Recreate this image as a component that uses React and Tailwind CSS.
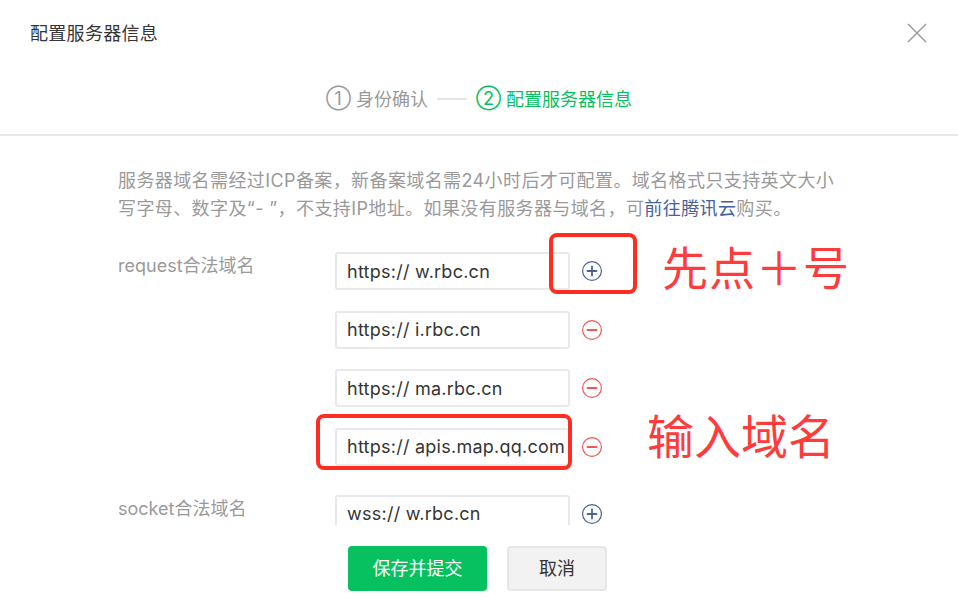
import React from "react";

const font = { fontFamily: 'Inter, "Noto Sans CJK SC", sans-serif' };

function CircleIcon({ type }) {
  const color = type === "plus" ? "#4a6399" : "#f25555";
  return (
    <svg width="22" height="22" viewBox="0 0 22 22" className="shrink-0">
      <circle cx="11" cy="11" r="9.4" fill="none" stroke={color} strokeWidth="1.2" />
      <line x1="6.5" y1="11" x2="15.5" y2="11" stroke={color} strokeWidth="1.8" strokeLinecap="round" />
      {type === "plus" && (
        <line x1="11" y1="6.5" x2="11" y2="15.5" stroke={color} strokeWidth="1.8" strokeLinecap="round" />
      )}
    </svg>
  );
}

function DomainInput({ value, icon }) {
  return (
    <div className="flex items-center gap-[11px]">
      <div className="w-[235px] h-[38px] border-2 border-[#e8e9ed] rounded-[3px] pl-[10px] flex items-center overflow-hidden whitespace-nowrap text-[18px] tracking-[0.25px] text-[#353535]">
        {value}
      </div>
      <CircleIcon type={icon} />
    </div>
  );
}

export default function App() {
  return (
    <div className="w-[958px] h-[598px] bg-white relative overflow-hidden" style={font}>
      {/* header */}
      <div className="h-[66px] flex items-center justify-between pl-[30px] pr-[31px]">
        <div className="text-[18px] text-[#353535] tracking-[0.3px]">配置服务器信息</div>
        <svg width="20" height="20" viewBox="0 0 20 20">
          <line x1="1" y1="1" x2="19" y2="19" stroke="#9a9a9a" strokeWidth="1.4" />
          <line x1="19" y1="1" x2="1" y2="19" stroke="#9a9a9a" strokeWidth="1.4" />
        </svg>
      </div>

      {/* steps */}
      <div className="h-[68px] flex items-center justify-center gap-[9px] text-[18px] pb-[2px]">
        <div className="flex items-center gap-[5px] text-[#9a9a9a]">
          <span className="text-[18px] leading-none">①</span>
          <span>身份确认</span>
        </div>
        <div className="w-[30px] h-[2px] bg-[#e2e5e9]" />
        <div className="flex items-center gap-[5px] text-[#07c160]">
          <span className="text-[18px] leading-none">②</span>
          <span>配置服务器信息</span>
        </div>
      </div>
      <div className="h-[2px] bg-[#e4e8eb]" />

      {/* scroll area */}
      <div className="h-[389px] overflow-hidden pl-[118px] pt-[31px]">
        <p className="text-[18px] leading-[28px] tracking-[0.4px] text-[#9a9a9a] w-[722px]">
          服务器域名需经过ICP备案，新备案域名需24小时后才可配置。域名格式只支持英文大小写字母、数字及“- ”，不支持IP地址。如果没有服务器与域名，可<span className="text-[#44619c]">前往腾讯云</span>购买。
        </p>

        <div className="flex mt-[29px]">
          <div className="w-[217px] text-[18px] leading-[28px] text-[#9a9a9a]">request合法域名</div>
          <div className="flex flex-col gap-[20.6px]">
            <DomainInput value="https:// w.rbc.cn" icon="plus" />
            <DomainInput value="https:// i.rbc.cn" icon="minus" />
            <DomainInput value="https:// ma.rbc.cn" icon="minus" />
            <DomainInput value="https:// apis.map.qq.com" icon="minus" />
          </div>
        </div>

        <div className="flex mt-[29px]">
          <div className="w-[217px] text-[18px] leading-[28px] text-[#9a9a9a]">socket合法域名</div>
          <div className="flex flex-col gap-[20px]">
            <DomainInput value="wss:// w.rbc.cn" icon="plus" />
          </div>
        </div>
      </div>

      {/* footer buttons */}
      <div className="flex justify-center gap-[20px] pt-[21px] pr-[3px]">
        <div className="w-[139px] h-[45px] rounded-[4px] bg-[#07c160] text-white text-[18px] flex items-center justify-center">
          保存并提交
        </div>
        <div className="w-[100px] h-[45px] rounded-[4px] bg-[#f2f2f2] border-2 border-[#e6e6e8] text-[#353535] text-[18px] flex items-center justify-center">
          取消
        </div>
      </div>

      {/* annotations */}
      <div className="absolute left-[549px] top-[233px] w-[88px] h-[61px] border-[4px] border-[#ff2d1f] rounded-[8px]" />
      <div className="absolute left-[316px] top-[414px] w-[256px] h-[56px] border-[4px] border-[#ff2d1f] rounded-[8px]" />
      <div className="absolute left-[662px] top-[240px] text-[46px] leading-[56px] text-[#ff3b3b] whitespace-nowrap tracking-[1px]">
        先点＋号
      </div>
      <div className="absolute left-[647px] top-[409px] text-[47px] leading-[56px] text-[#ff3b3b] whitespace-nowrap">
        输入域名
      </div>
    </div>
  );
}
